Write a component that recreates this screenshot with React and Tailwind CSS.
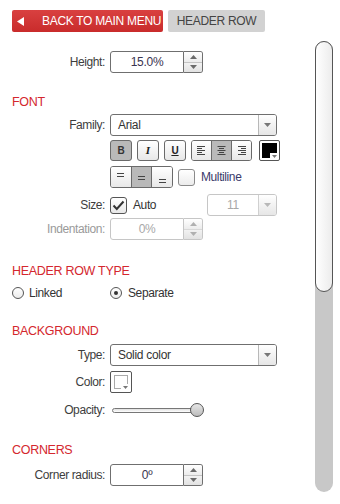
import React from "react";

const Tri = ({ up, color = "#6a6a6a" }) => (
  <svg width="7" height="4" viewBox="0 0 7 4">
    {up ? <path d="M0 4 L3.5 0 L7 4 Z" fill={color} /> : <path d="M0 0 L7 0 L3.5 4 Z" fill={color} />}
  </svg>
);

function Spin({ value, disabled }) {
  const b = disabled ? "border-[#c6c6c6]" : "border-[#6f6f6f]";
  return (
    <div className="flex h-[22px] w-[93px]">
      <div
        className={`flex-1 border ${b} rounded-l-[3px] flex items-center justify-center text-[12px] tracking-[-0.3px] ${
          disabled ? "text-[#a8a8a8]" : "text-[#3a3450]"
        }`}
      >
        {value}
      </div>
      <div className={`w-[19px] flex flex-col border border-l-0 ${b} rounded-r-[3px] overflow-hidden`}>
        <div className={`flex-1 flex items-center justify-center bg-linear-to-b from-white to-[#ececec] border-b ${disabled ? "border-[#d8d8d8]" : "border-[#c4c4c4]"}`}>
          <Tri up color={disabled ? "#b0b0b0" : "#6a6a6a"} />
        </div>
        <div className="flex-1 flex items-center justify-center bg-linear-to-b from-[#f2f2f2] to-[#e2e2e2]">
          <Tri color={disabled ? "#b0b0b0" : "#6a6a6a"} />
        </div>
      </div>
    </div>
  );
}

function Select({ value, w = "w-[167px]", disabled, center }) {
  const b = disabled ? "border-[#c6c6c6]" : "border-[#6f6f6f]";
  return (
    <div className={`flex h-[22px] ${w} border ${b} rounded-[3px] overflow-hidden`}>
      <div
        className={`flex-1 flex items-center text-[12px] tracking-[-0.3px] ${center ? "justify-center" : "pl-[7px]"} ${
          disabled ? "text-[#a8a8a8]" : "text-[#333]"
        }`}
      >
        {value}
      </div>
      <div className={`w-[18px] flex items-center justify-center border-l ${disabled ? "border-[#d0d0d0]" : "border-[#b8b8b8]"} bg-linear-to-b from-white to-[#e6e6e6]`}>
        <Tri color={disabled ? "#b8b8b8" : "#777"} />
      </div>
    </div>
  );
}

const Label = ({ children, disabled }) => (
  <div className={`w-[98px] text-right pr-[5px] text-[12px] tracking-[-0.4px] ${disabled ? "text-[#9a9a9a]" : "text-[#3d3d3d]"}`}>
    {children}
  </div>
);

const Row = ({ children, className = "" }) => <div className={`flex items-center ${className}`}>{children}</div>;

const Header = ({ children, className = "" }) => (
  <div className={`h-[14px] leading-[14px] text-[12.5px] tracking-[-0.3px] text-[#d4272e] ${className}`}>{children}</div>
);

const btnBase = "h-[21px] border border-[#6a6a6a] rounded-[3px] flex items-center justify-center";

function AlignIcon({ kind }) {
  const rows = [0, 2, 4, 6, 8];
  const lens = [8, 5, 8, 5, 8];
  return (
    <svg width="9" height="9" viewBox="0 0 9 9">
      {rows.map((y, i) => {
        const l = lens[i];
        const x = kind === "left" ? 0 : kind === "right" ? 9 - l : (9 - l) / 2;
        return <rect key={i} x={x} y={y} width={l} height="1" fill="#444" />;
      })}
    </svg>
  );
}

function VAlignIcon({ pos }) {
  const y = pos === "top" ? 2 : pos === "mid" ? 5 : 8;
  return (
    <svg width="9" height="13" viewBox="0 0 9 13">
      <rect x="1" y={y} width="7" height="1" fill="#444" />
      <rect x="1" y={y + 3} width="7" height="1" fill="#444" />
    </svg>
  );
}

export default function App() {
  return (
    <div className="w-[340px] h-[504px] bg-white flex overflow-hidden font-['Liberation_Sans',Arial,sans-serif]">
      <div className="flex-1 pl-[12px] pt-[10px]">
        {/* top buttons */}
        <div className="flex gap-[5px]">
          <div className="h-[22px] w-[151px] bg-linear-to-b from-[#d94040] to-[#c92b2b] rounded-[2px] flex items-center text-white text-[12px] tracking-[-0.3px]">
            <svg width="8" height="9" viewBox="0 0 8 9" className="ml-[5px]">
              <path d="M0 4.5 L7 0 L7 9 Z" fill="white" />
            </svg>
            <span className="ml-[17px]">BACK TO MAIN MENU</span>
          </div>
          <div className="h-[22px] w-[97px] bg-[#d2d2d2] rounded-[2px] flex items-center justify-center text-[#444] text-[12px] tracking-[-0.3px]">
            HEADER ROW
          </div>
        </div>

        <Row className="mt-[19px]">
          <Label>Height:</Label>
          <Spin value="15.0%" />
        </Row>

        <Header className="mt-[22px]">FONT</Header>

        <Row className="mt-[5px]">
          <Label>Family:</Label>
          <Select value="Arial" />
        </Row>

        <Row className="mt-[4px] pl-[98px] gap-[5px]">
          <div className={`${btnBase} w-[22px] bg-[#b9b9b9] font-bold text-[10px] text-[#333]`}>B</div>
          <div className={`${btnBase} w-[22px] bg-linear-to-b from-white to-[#e8e8e8] font-['Liberation_Serif',serif] italic font-bold text-[11px] text-[#222]`}>I</div>
          <div className={`${btnBase} w-[22px] bg-linear-to-b from-white to-[#e8e8e8] font-bold text-[10px] text-[#222] underline`}>U</div>
          <div className="h-[21px] w-[61px] border border-[#6a6a6a] rounded-[3px] flex overflow-hidden">
            <div className="flex-1 flex items-center justify-center bg-linear-to-b from-white to-[#e8e8e8] border-r border-[#6a6a6a]">
              <AlignIcon kind="left" />
            </div>
            <div className="flex-1 flex items-center justify-center bg-[#b9b9b9] border-r border-[#6a6a6a]">
              <AlignIcon kind="center" />
            </div>
            <div className="flex-1 flex items-center justify-center bg-linear-to-b from-white to-[#e8e8e8]">
              <AlignIcon kind="right" />
            </div>
          </div>
          <div className="ml-[2px] h-[21px] w-[21px] border border-[#555] rounded-[2px] p-[2px] bg-white">
            <div className="relative w-full h-full bg-black">
              <div className="absolute right-0 bottom-0 w-[7px] h-[5px] bg-white flex items-end justify-end">
                <svg width="5" height="3" viewBox="0 0 5 3"><path d="M0 0 L5 0 L2.5 3 Z" fill="#777" /></svg>
              </div>
            </div>
          </div>
        </Row>

        <Row className="mt-[5px] pl-[98px]">
          <div className="h-[22px] w-[63px] border border-[#6a6a6a] rounded-[3px] flex overflow-hidden">
            <div className="flex-1 flex items-center justify-center bg-linear-to-b from-white to-[#e8e8e8] border-r border-[#6a6a6a]">
              <VAlignIcon pos="top" />
            </div>
            <div className="flex-1 flex items-center justify-center bg-[#b9b9b9] border-r border-[#6a6a6a]">
              <VAlignIcon pos="mid" />
            </div>
            <div className="flex-1 flex items-center justify-center bg-linear-to-b from-white to-[#e8e8e8]">
              <VAlignIcon pos="bot" />
            </div>
          </div>
          <div className="ml-[5px] w-[17px] h-[17px] border border-[#8a8a8a] rounded-[3px] bg-linear-to-b from-white to-[#ececec]" />
          <span className="ml-[6px] text-[12px] tracking-[-0.4px] text-[#3a3a6a]">Multiline</span>
        </Row>

        <Row className="mt-[8px] h-[18px]">
          <Label>Size:</Label>
          <div className="w-[97px] flex items-center">
            <div className="w-[17px] h-[17px] border border-[#555] rounded-[3px] bg-linear-to-b from-white to-[#e8e8e8] flex items-center justify-center">
              <svg width="13" height="11" viewBox="0 0 13 11">
                <path d="M1.5 5.5 L4.8 9 L11.5 1.5" stroke="#333" strokeWidth="2" fill="none" />
              </svg>
            </div>
            <span className="ml-[6px] text-[12px] tracking-[-0.4px] text-[#333]">Auto</span>
          </div>
          <Select value="11" w="w-[70px]" disabled center />
        </Row>

        <Row className="mt-[4px]">
          <Label disabled>Indentation:</Label>
          <Spin value="0%" disabled />
        </Row>

        <Header className="mt-[24px]">HEADER ROW TYPE</Header>

        <Row className="mt-[8px] h-[14px] text-[12px] tracking-[-0.4px] text-[#333]">
          <div className="w-[98px] flex items-center">
            <div className="w-[12px] h-[12px] rounded-full border border-[#555] bg-linear-to-b from-white to-[#ececec]" />
            <span className="ml-[5px]">Linked</span>
          </div>
          <div className="w-[12px] h-[12px] rounded-full border border-[#555] bg-linear-to-b from-white to-[#ececec] flex items-center justify-center">
            <div className="w-[4px] h-[4px] rounded-full bg-[#333]" />
          </div>
          <span className="ml-[6px]">Separate</span>
        </Row>

        <Header className="mt-[24px]">BACKGROUND</Header>

        <Row className="mt-[6px]">
          <Label>Type:</Label>
          <Select value="Solid color" />
        </Row>

        <Row className="mt-[5px]">
          <Label>Color:</Label>
          <div className="w-[22px] h-[22px] border border-[#555] rounded-[2px] p-[3px] bg-white">
            <div className="relative w-full h-full border border-[#aaa]">
              <div className="absolute right-[-1px] bottom-[-1px] w-[7px] h-[5px] bg-white flex items-end justify-end">
                <svg width="5" height="3" viewBox="0 0 5 3"><path d="M0 0 L5 0 L2.5 3 Z" fill="#777" /></svg>
              </div>
            </div>
          </div>
        </Row>

        <Row className="mt-[10px] h-[14px]">
          <Label>Opacity:</Label>
          <div className="relative w-[93px] h-[14px] flex items-center">
            <div className="ml-[2px] w-[84px] h-[5px] rounded-full border border-[#777] bg-linear-to-b from-[#e0e0e0] to-white" />
            <div className="absolute left-[80px] top-0 w-[14px] h-[14px] rounded-full border border-[#555] bg-linear-to-b from-[#e6e6e6] to-[#bdbdbd]" />
          </div>
        </Row>

        <Header className="mt-[26px]">CORNERS</Header>

        <Row className="mt-[7px]">
          <Label>Corner radius:</Label>
          <Spin value="0º" />
        </Row>
      </div>

      <div className="w-[18px] mr-[7px] mt-[41px] h-[451px] rounded-full bg-[#c8c8c8] flex flex-col">
        <div className="h-[251px] rounded-full border border-[#555] bg-linear-to-r from-white to-[#ececec]" />
      </div>
    </div>
  );
}
